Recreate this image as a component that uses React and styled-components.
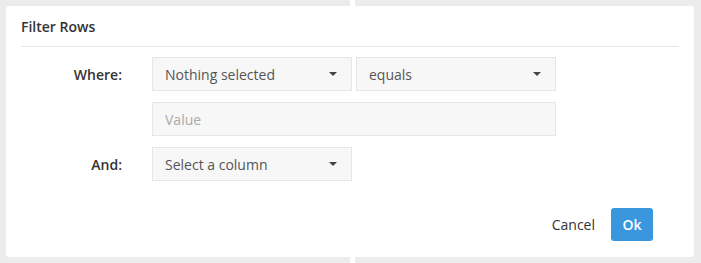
import React from "react";
import styled, { createGlobalStyle } from "styled-components";

const GlobalStyle = createGlobalStyle`
  html, body {
    margin: 0;
    padding: 0;
  }
  body {
    font-family: "Open Sans", "Liberation Sans", sans-serif;
    font-size: 14px;
    color: #333;
  }
`;

// two grey columns behind the dialog, with a thin white gap
const Page = styled.div`
  position: relative;
  display: grid;
  grid-template-columns: 350px 1fr;
  column-gap: 5px;
  width: 701px;
  height: 263px;
  background: #fff;
`;

const Column = styled.div`
  background: #ececec;
`;

const Modal = styled.div`
  position: absolute;
  top: 6px;
  left: 6px;
  width: 688px;
  height: 251px;
  box-sizing: border-box;
  background: #fff;
  border-radius: 3px;
  display: flex;
  flex-direction: column;
`;

const Header = styled.div`
  margin: 0 15px;
  height: 40px;
  display: flex;
  align-items: center;
  border-bottom: 1px solid #e6e6e6;
`;

const Title = styled.h4`
  margin: 0;
  font-size: 14px;
  font-weight: 600;
  color: #333;
`;

const Form = styled.div`
  display: grid;
  grid-template-columns: 101px auto;
  column-gap: 30px;
  row-gap: 11px;
  padding: 10px 15px 0;
  align-items: center;
`;

const Label = styled.label`
  text-align: right;
  font-weight: 600;
  color: #333;
`;

const Controls = styled.div`
  display: flex;
  gap: 4px;
`;

const Select = styled.div`
  box-sizing: border-box;
  width: ${(p) => p.width}px;
  height: 34px;
  padding: 0 14px 0 12px;
  display: flex;
  align-items: center;
  justify-content: space-between;
  background: #f7f7f7;
  border: 1px solid #e6e6e6;
  color: #555;
  cursor: pointer;
`;

const Caret = styled.span`
  width: 0;
  height: 0;
  border-left: 4px solid transparent;
  border-right: 4px solid transparent;
  border-top: 4px solid #444;
`;

const Input = styled.input`
  box-sizing: border-box;
  width: 404px;
  height: 34px;
  padding: 0 12px;
  background: #f7f7f7;
  border: 1px solid #e6e6e6;
  font-family: inherit;
  font-size: 14px;
  color: #555;
  outline: none;
  &::placeholder {
    color: #aaa;
  }
`;

const Footer = styled.div`
  margin-top: auto;
  padding: 0 41px 16px 0;
  display: flex;
  justify-content: flex-end;
  align-items: center;
  gap: 4px;
`;

const Button = styled.button`
  height: 33px;
  min-width: ${(p) => (p.primary ? "42px" : "0")};
  padding: ${(p) => (p.primary ? "0 10px" : "0 12px")};
  border: none;
  border-radius: 3px;
  font-family: inherit;
  font-size: 14px;
  font-weight: ${(p) => (p.primary ? 600 : 400)};
  background: ${(p) => (p.primary ? "#3a97dd" : "transparent")};
  color: ${(p) => (p.primary ? "#fff" : "#333")};
  cursor: pointer;
`;

const Dropdown = ({ width, children }) => (
  <Select width={width}>
    <span>{children}</span>
    <Caret />
  </Select>
);

export default function App() {
  return (
    <>
      <GlobalStyle />
      <Page>
        <Column />
        <Column />
        <Modal>
          <Header>
            <Title>Filter Rows</Title>
          </Header>
          <Form>
            <Label>Where:</Label>
            <Controls>
              <Dropdown width={200}>Nothing selected</Dropdown>
              <Dropdown width={200}>equals</Dropdown>
            </Controls>
            <span />
            <Controls>
              <Input placeholder="Value" />
            </Controls>
            <Label>And:</Label>
            <Controls>
              <Dropdown width={200}>Select a column</Dropdown>
            </Controls>
          </Form>
          <Footer>
            <Button>Cancel</Button>
            <Button primary>Ok</Button>
          </Footer>
        </Modal>
      </Page>
    </>
  );
}
